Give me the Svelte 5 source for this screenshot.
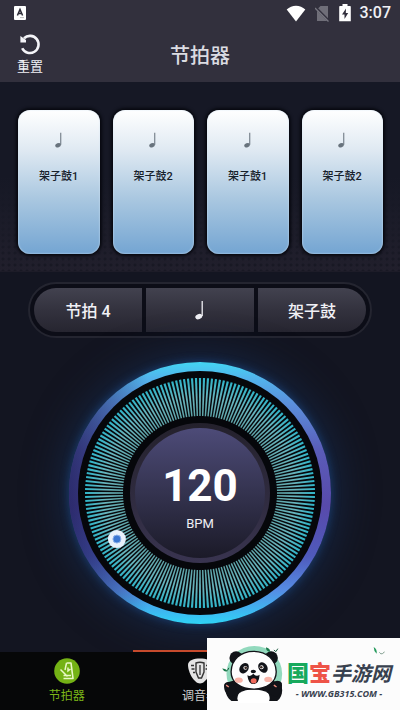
<script lang="ts">
	const DEFAULT_BPM = 120;
	const pads = ['架子鼓1', '架子鼓2', '架子鼓1', '架子鼓2'];
	const ticks = Array.from({ length: 180 }, (_, i) => i * 2);

	let bpm = $state(DEFAULT_BPM);
	let angle = $derived(((151 + bpm - DEFAULT_BPM) * Math.PI) / 180);
	let knobX = $derived(131 + 95 * Math.cos(angle));
	let knobY = $derived(131 + 95 * Math.sin(angle));

	function reset() {
		bpm = DEFAULT_BPM;
	}
</script>

{#snippet note()}
	<svg class="note" viewBox="0 0 10 20" aria-hidden="true">
		<ellipse cx="3.8" cy="16.6" rx="3.6" ry="2.6" transform="rotate(-20 3.8 16.6)" fill="currentColor" />
		<path d="M7.2 1v15" stroke="currentColor" stroke-width="1.3" />
	</svg>
{/snippet}

<div class="app">
	<header>
		<div class="status">
			<svg class="ime" width="12" height="14" viewBox="0 0 12 14" aria-hidden="true">
				<rect width="12" height="14" rx="1" fill="#fff" />
				<path d="M3.4 9.5 6 3.4l2.6 6.1M4.3 7.6h3.4" fill="none" stroke="#2c2b36" stroke-width="1.5" />
				<path d="M6 11.6h4" stroke="#aaa" stroke-width=".8" />
			</svg>
			<svg width="20" height="17" viewBox="0 0 20 17" aria-hidden="true">
				<path d="M10 16.5.7 4.6C3.3 2.1 6.500 .8 10 .8s6.700 1.300 9.300 3.800z" fill="#fff" />
			</svg>
			<svg width="15" height="17" viewBox="0 0 15 17" aria-hidden="true">
				<path d="M5.500 1H13v15H2V4.500z" fill="#6f6e78" />
				<path d="M.5 2.500 14.500 16.500" stroke="#32303d" stroke-width="2.600" />
				<path d="M0 3 13.500 16.500" stroke="#777680" stroke-width="1.300" />
			</svg>
			<svg width="12" height="18" viewBox="0 0 12 18" aria-hidden="true">
				<path d="M3.500 0h5v2H11a.8.8 0 0 1 .8.8v14.400H.2V2.800A.8.8 0 0 1 1 2h2.500z" fill="#fff" />
				<path d="M7 4.500 3 10.500h2.500V15l3.700-6H6.800z" fill="#32303d" />
			</svg>
			<time>3:07</time>
		</div>
		<div class="bar">
			<button class="reset" onclick={reset}>
				<svg width="22" height="22" viewBox="0 0 22 22" aria-hidden="true">
					<path d="M5 4.200A8.600 8.600 0 1 1 3.200 14.200" fill="none" stroke="#f4f4f8" stroke-width="2.600" />
					<path d="M1.400 2v6.600H7V6z" fill="#f4f4f8" />
				</svg>
				重置
			</button>
			<h1>节拍器</h1>
		</div>
	</header>

	<section class="pads">
		{#each pads as pad}
			<button class="pad">
				{@render note()}
				<span>{pad}</span>
			</button>
		{/each}
	</section>

	<main>
		<div class="segments">
			<button>节拍 4</button>
			<button aria-label="音符">{@render note()}</button>
			<button>架子鼓</button>
		</div>

		<div class="dial">
			<svg viewBox="0 0 262 262" aria-hidden="true">
				<defs>
					<linearGradient id="ring" x1="0" y1="0" x2="0" y2="1">
						<stop offset="0" stop-color="#43d6f3" />
						<stop offset=".06" stop-color="#52b4ec" />
						<stop offset=".16" stop-color="#5b8fdc" />
						<stop offset=".34" stop-color="#5a5cb8" />
						<stop offset=".55" stop-color="#584aab" />
						<stop offset=".74" stop-color="#4f5abc" />
						<stop offset=".87" stop-color="#568ce4" />
						<stop offset=".96" stop-color="#3bbcf2" />
						<stop offset="1" stop-color="#2fd4f5" />
					</linearGradient>
					<linearGradient id="shade">
						<stop offset="0" stop-color="#141a4a" stop-opacity=".65" />
						<stop offset=".3" stop-color="#141a4a" stop-opacity="0" />
					</linearGradient>
					<linearGradient id="face" x1="0" y1="0" x2="0" y2="1">
						<stop offset="0" stop-color="#4d4b78" />
						<stop offset=".5" stop-color="#34334f" />
						<stop offset="1" stop-color="#1b1a28" />
					</linearGradient>
					<linearGradient id="rim" x1="0" y1="0" x2="0" y2="1">
						<stop offset="0" stop-color="#24212c" />
						<stop offset="1" stop-color="#393450" />
					</linearGradient>
					<linearGradient id="tick" gradientUnits="userSpaceOnUse" x1="0" y1="-115" x2="0" y2="-77">
						<stop offset="0" stop-color="#2fb4c8" />
						<stop offset=".5" stop-color="#68b4bd" />
						<stop offset="1" stop-color="#5fa4a8" />
					</linearGradient>
				</defs>
				<circle cx="131" cy="131" r="131" fill="url(#ring)" />
				<circle cx="131" cy="131" r="131" fill="url(#shade)" />
				<circle cx="131" cy="131" r="122" fill="#06070b" />
				<g transform="translate(131 131)" fill="url(#tick)">
					{#each ticks as deg}
						<path d="M-1.100-115h2.200L.7-77h-1.400z" transform="rotate({deg})" />
					{/each}
				</g>
				<circle cx="131" cy="131" r="70" fill="url(#rim)" />
				<circle cx="131" cy="131" r="65" fill="url(#face)" />
				<circle cx={knobX} cy={knobY} r="9" fill="#e9f1fc" />
				<circle cx={knobX} cy={knobY} r="4" fill="#3a76d2" stroke="#8fb2ea" stroke-width="1" />
			</svg>
			<div class="readout">
				<output for="bpm">{bpm}</output>
				<label for="bpm">BPM</label>
			</div>
			<input id="bpm" type="range" min="30" max="300" bind:value={bpm} />
		</div>
	</main>

	<nav>
		<a href="#metronome" class="active">
			<svg width="26" height="26" viewBox="0 0 26 26" aria-hidden="true">
				<circle cx="13" cy="13" r="12.800" fill="#74b215" />
				<path d="M12.500 5h4.500l2 15.500H9.500" fill="none" stroke="#eaf8c8" stroke-width="1.600" stroke-linejoin="round" />
				<path d="M12.500 5l-1.500 7M6.500 11.500l7 7M9.500 17.500H17M14 9.500v3.500l2.500-2" fill="none" stroke="#eaf8c8" stroke-width="1.500" />
			</svg>
			节拍器
		</a>
		<a href="#tuner" class="tuner">
			<svg width="26" height="26" viewBox="0 0 26 26" aria-hidden="true">
				<path d="M13 .5c6 0 12 1.500 12 6.500 0 7-6 18.500-12 18.500S1 14 1 7C1 2 7 .5 13 .5z" fill="#e4e4e4" />
				<path d="M9 5c2.500-1 5.500-1 8 0v9l-2.500 6h-3L9 14z" fill="none" stroke="#333" stroke-width="1.400" />
				<path d="M13 7v10M4 7.500h3M4.500 11h3M6 14.500h2M19 7.500h3M18.500 11h3" stroke="#333" stroke-width="1.300" />
			</svg>
			调音器
		</a>
	</nav>

	<aside>
		<svg class="panda" viewBox="60 55 195 175" aria-hidden="true">
			<circle cx="163" cy="142" r="84" fill="#92d9bd" />
			<path d="M80 168c-8 18-5 42 14 56h138c16-12 19-36 10-52l-30-12H110z" fill="#111318" />
			<path d="M118 200c20-14 66-14 86 0 8 12 6 22 0 30h-86c-8-8-8-20 0-30z" fill="#fff" />
			<circle cx="108" cy="94" r="20" fill="#111318" />
			<circle cx="214" cy="94" r="20" fill="#111318" />
			<path d="M161 74c40 0 67 26 68 61 1 33-29 53-68 53s-69-20-68-53c1-35 28-61 68-61z" fill="#fdfdfd" stroke="#111318" stroke-width="4" />
			<ellipse cx="132" cy="125" rx="13" ry="17" transform="rotate(35 132 125)" fill="#111318" />
			<ellipse cx="189" cy="123" rx="13" ry="17" transform="rotate(-35 189 123)" fill="#111318" />
			<circle cx="136" cy="124" r="6" fill="#fff" />
			<circle cx="185" cy="122" r="6" fill="#fff" />
			<circle cx="137" cy="124" r="4" fill="#3a2a24" />
			<circle cx="184" cy="122" r="4" fill="#3a2a24" />
			<ellipse cx="160" cy="135" rx="8" ry="5" fill="#111318" />
			<path d="M142 146q9 6 18-4 9 10 19 3-2 28-18 28t-19-27z" fill="#111318" />
			<ellipse cx="161" cy="163" rx="9" ry="8" fill="#ef6a5c" />
			<ellipse cx="116" cy="161" rx="12" ry="8" fill="#f8b4a8" />
			<ellipse cx="205" cy="159" rx="12" ry="8" fill="#f8b4a8" />
			<path d="M72 174c8-12 24-8 30 4l14 22-24 12c-16-8-22-24-20-38zM246 170c-8-12-24-8-30 4l-14 24 26 14c16-8 20-26 18-42z" fill="#111318" />
			<path d="M78 176l8 6M222 176l8 6" stroke="#ef8a7c" stroke-width="4" />
			<path d="M198 62q14 4 12 14-12-2-12-14zM66 126q12 0 16 8-10 4-16-8z" fill="#1c7a4c" />
			<path d="M222 70l6 5 6-9M82 132l4-8" fill="none" stroke="#1c5a40" stroke-width="3" />
		</svg>
		<div class="brand">
			<svg class="leaf" viewBox="0 0 36 24" aria-hidden="true">
				<path d="M2 0q11 7 9 20Q2 12 2 0z" fill="#249a5c" />
				<path d="M19 16q5 7 9 4 4-1 6-6" fill="none" stroke="#6a8d7c" stroke-width="2.500" />
			</svg>
			<p class="name"><b class="green">国</b><b class="red">宝</b>手游网</p>
			<p class="url">- WWW.GB315.COM -</p>
		</div>
	</aside>
</div>

<style>
	:global(body) {
		margin: 0;
		background: #131521;
	}

	.app {
		position: relative;
		display: flex;
		flex-direction: column;
		min-height: 100vh;
		overflow: hidden;
		color: #f0f0f5;
		font-family: Roboto, 'Noto Sans CJK SC', sans-serif;
	}

	button {
		padding: 0;
		border: 0;
		background: none;
		color: inherit;
		font: inherit;
		cursor: pointer;
	}

	h1,
	p {
		margin: 0;
	}

	header {
		background: #32303d;
	}

	.status {
		display: flex;
		align-items: center;
		gap: 9px;
		height: 26px;
		padding: 0 9px 0 14px;
	}

	.ime {
		margin-right: auto;
	}

	time {
		font-size: 16px;
		font-weight: 500;
		line-height: 28px;
	}

	.bar {
		display: grid;
		grid-template-columns: 60px 1fr 60px;
		align-items: center;
		height: 56px;
	}

	.reset {
		display: flex;
		flex-direction: column;
		align-items: center;
		gap: 3px;
		font-size: 13px;
		line-height: 16px;
	}

	h1 {
		padding-top: 4px;
		font-size: 20px;
		font-weight: 500;
		line-height: 30px;
		text-align: center;
		color: #dcdce2;
	}

	.pads {
		display: grid;
		grid-template-columns: repeat(4, 1fr);
		gap: 13px;
		padding: 28px 17px 17px 18px;
		background:
			linear-gradient(#161825 50%, #1a1b28aa 80%, transparent),
			radial-gradient(circle, #181823 1px, transparent 2px) 0 0 / 6px 6px,
			#211f2c;
	}

	.pad {
		display: flex;
		flex-direction: column;
		align-items: center;
		gap: 20px;
		height: 144px;
		padding-top: 22px;
		box-sizing: border-box;
		border-radius: 12px;
		background: linear-gradient(#fff, #dfe9f2 28%, #a9c7e0 62%, #74a5d2);
		box-shadow:
			inset 0 0 2px #d5e6f5,
			0 0 3px 2px #080910;
		color: #17212b;
		font-size: 11px;
		font-weight: 500;
		line-height: 18px;
	}

	.note {
		width: 8px;
		height: 16px;
	}

	.pad .note {
		color: #68737d;
	}

	main {
		flex: 1;
		display: flex;
		flex-direction: column;
		align-items: center;
		gap: 24px;
		padding: 10px 28px 28px;
		background: #131521;
		border-top: 1px solid #1d1c28;
	}

	.segments {
		display: grid;
		grid-template-columns: repeat(3, 1fr);
		gap: 4px;
		width: 100%;
		height: 56px;
		padding: 4px;
		box-sizing: border-box;
		border: 2px solid #242530;
		border-radius: 28px;
		background: #0c0d17;
	}

	.segments button {
		display: grid;
		place-items: center;
		background: linear-gradient(#42424f, #33323e 50%, #262530);
		font-size: 16px;
		font-weight: 500;
	}

	.segments button:first-child {
		border-radius: 22px 0 0 22px;
	}

	.segments button:last-child {
		border-radius: 0 22px 22px 0;
	}

	.segments .note {
		width: 10px;
		height: 20px;
	}

	.dial {
		position: relative;
		display: grid;
		place-items: center;
		width: 100%;
		max-width: 262px;
		border-radius: 50%;
		box-shadow:
			0 0 10px #1a4074,
			0 0 40px 4px #16294a;
	}

	.dial svg,
	.readout {
		grid-area: 1 / 1;
	}

	.dial svg {
		display: block;
		width: 100%;
	}

	.readout {
		display: flex;
		flex-direction: column;
		align-items: center;
		gap: 4px;
		padding-top: 6px;
	}

	output {
		font-size: 44px;
		font-weight: 700;
		line-height: 52px;
		color: #fff;
	}

	label {
		font-size: 13px;
		line-height: 16px;
	}

	.dial input {
		position: absolute;
		inset: 0;
		width: 100%;
		height: 100%;
		margin: 0;
		opacity: 0;
		cursor: pointer;
	}

	nav {
		position: relative;
		display: grid;
		grid-template-columns: repeat(3, 1fr);
		background: #060708;
	}

	nav a {
		display: flex;
		flex-direction: column;
		align-items: center;
		gap: 3px;
		padding: 6px 0 5px;
		color: #d0d0d0;
		font-size: 12px;
		line-height: 18px;
		text-decoration: none;
	}

	nav .active {
		color: #7cb518;
	}

	nav .tuner {
		box-shadow: 0 -2px #c64a2c;
	}

	aside {
		position: absolute;
		right: 0;
		bottom: 0;
		display: flex;
		align-items: center;
		gap: 2px;
		width: 193px;
		height: 72px;
		padding-left: 13px;
		box-sizing: border-box;
		background: #fcfcfc;
		color: #38414f;
	}

	.panda {
		width: 65px;
		height: 58px;
	}

	.brand {
		position: relative;
		padding-top: 10px;
		text-align: center;
		white-space: nowrap;
	}

	.leaf {
		position: absolute;
		top: 0;
		right: 6px;
		width: 12px;
		height: 8px;
	}

	.name {
		font-family: 'Noto Sans CJK SC', sans-serif;
		font-size: 20px;
		font-style: italic;
		font-weight: 700;
		line-height: 28px;
	}

	.name b {
		font-size: 22px;
		font-style: normal;
		font-weight: 900;
	}

	.green {
		color: #17a95c;
	}

	.red {
		color: #ee5347;
	}

	.url {
		font-family: 'Open Sans', sans-serif;
		font-size: 9px;
		font-style: italic;
		font-weight: 700;
		line-height: 14px;
	}
</style>
